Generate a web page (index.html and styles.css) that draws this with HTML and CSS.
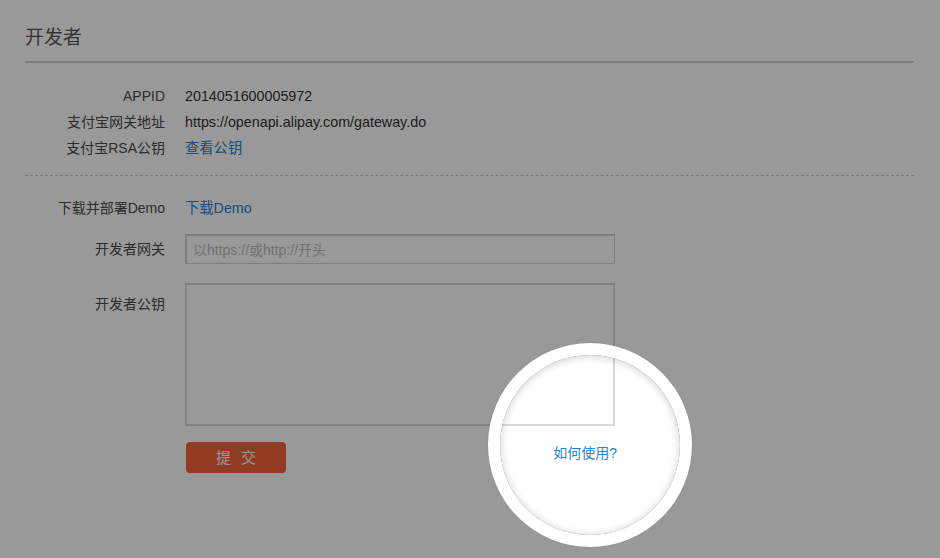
FILE: index.html
```html
<!DOCTYPE html>
<html>
	<head>
		<meta charset="utf-8" />
		<title>开发者</title>
		<link rel="stylesheet" href="styles.css">
	</head>
	<body>
		<div class="page">
			<h2 class="title">开发者</h2>
			<div class="info">
				<div class="row">
					<div class="label">APPID</div>
					<div class="value">2014051600005972</div>
				</div>
				<div class="row">
					<div class="label">支付宝网关地址</div>
					<div class="value">https://openapi.alipay.com/gateway.do</div>
				</div>
				<div class="row">
					<div class="label">支付宝RSA公钥</div>
					<div class="value"><a class="link" href="#">查看公钥</a></div>
				</div>
			</div>
			<div class="form">
				<div class="row">
					<div class="label">下载并部署Demo</div>
					<div class="value"><a class="link" href="#">下载Demo</a></div>
				</div>
				<div class="row row-input">
					<div class="label">开发者网关</div>
					<div class="value"><input class="ipt" type="text" placeholder="以https://或http://开头"></div>
				</div>
				<div class="row row-area">
					<div class="label">开发者公钥</div>
					<div class="value"><textarea class="area"></textarea></div>
				</div>
				<div class="row row-btn">
					<div class="label"></div>
					<div class="value btn-bar">
						<div class="btn">提&nbsp;交</div>
						<a class="link help" href="#">如何使用?</a>
					</div>
				</div>
			</div>
		</div>
		<div class="spot"></div>
	</body>
</html>
```

FILE: styles.css
```css
*{
	margin: 0;
	padding: 0;
	border: 0;
	box-sizing: border-box;
}
html,body{
	width: 940px;
	height: 558px;
	overflow: hidden;
	background: #fff;
}
body{
	font-family: "Liberation Sans", "Noto Sans CJK SC", sans-serif;
	font-size: 14px;
	color: #333;
	position: relative;
}
.page{
	padding: 0 26px 0 25px;
}
.title{
	font-size: 19px;
	font-weight: normal;
	color: #555;
	line-height: 24px;
	padding: 26px 0 11px;
	border-bottom: 2px solid #d2d2d2;
}
.info{
	padding: 20px 0 14px;
	border-bottom: 1px dashed #c8c8c8;
}
.row{
	display: flex;
	line-height: 26px;
}
.label{
	width: 140px;
	text-align: right;
	color: #4a4a4a;
	flex-shrink: 0;
}
.value{
	margin-left: 20px;
	color: #333;
	font-size: 14.3px;
}
.link{
	color: #2284d4;
	text-decoration: none;
}
.form{
	padding-top: 19px;
}
.row-input{
	margin-top: 13px;
	line-height: 30px;
}
.ipt{
	display: block;
	width: 430px;
	height: 30px;
	border: 2px solid #d4d4d4;
	border-width: 2px 1px 1px 2px;
	padding: 0 6px;
	font-family: inherit;
	font-size: 14px;
	color: #333;
	outline: none;
}
.ipt::placeholder{
	color: #bdbdbd;
}
.row-area{
	margin-top: 19px;
}
.row-area .label{
	padding-top: 8px;
}
.area{
	display: block;
	width: 430px;
	height: 143px;
	border: 2px solid #d9d9d9;
	resize: none;
	outline: none;
}
.row-btn{
	margin-top: 16px;
}
.btn-bar{
	width: 430px;
	display: flex;
	justify-content: space-between;
	align-items: flex-start;
}
.btn{
	width: 100px;
	height: 31px;
	margin-left: 1px;
	line-height: 31px;
	text-align: center;
	color: #fff;
	font-size: 15px;
	border-radius: 4px;
	background: #f5633a;
	letter-spacing: 3px;
	padding-left: 3px;
}
.help{
	font-size: 14px;
	line-height: 22px;
	margin-top: 0;
	margin-right: -2px;
}
.spot{
	position: absolute;
	left: 500px;
	top: 355px;
	width: 180px;
	height: 180px;
	border-radius: 50%;
	pointer-events: none;
	box-shadow: inset 0 1px 8px rgba(0,0,0,0.2), 0 0 0 12px #fff, 0 0 2px 12px rgba(0,0,0,0.1), 0 0 0 2000px rgba(0,0,0,0.4);
}
```
